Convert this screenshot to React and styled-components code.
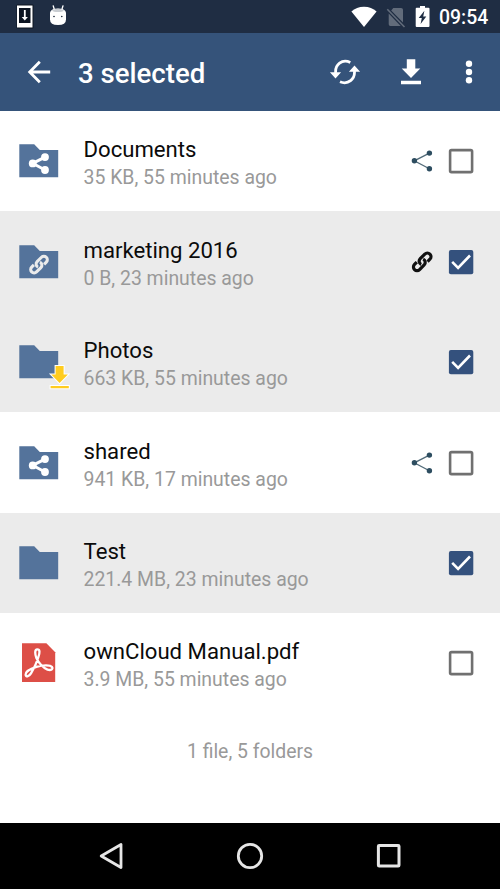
import React from "react";
import styled, { createGlobalStyle } from "styled-components";

const GlobalStyle = createGlobalStyle`
  * { box-sizing: border-box; }
  body { margin: 0; background: #fff; font-family: Roboto, "Liberation Sans", sans-serif; }
  svg { display: block; flex: none; }
`;

const Screen = styled.div`
  width: 500px;
  height: 889px;
  display: flex;
  flex-direction: column;
  overflow: hidden;
  background: #fff;
`;

const StatusBar = styled.header`
  height: 33px;
  flex: none;
  display: flex;
  align-items: center;
  justify-content: space-between;
  padding: 0 11px 0 16px;
  background: #1f2d43;
`;

const StatusGroup = styled.div`
  display: flex;
  align-items: center;
  height: 33px;
  gap: ${(p) => p.$gap}px;
`;

const Clock = styled.time`
  width: 50px;
  color: #fff;
  font-size: 19.4px;
  font-weight: 500;
  line-height: 33px;
  white-space: nowrap;
  padding-top: 1px;
`;

const AppBar = styled.div`
  height: 78px;
  flex: none;
  display: flex;
  align-items: center;
  padding: 0 27px 0 26px;
  background: #35537a;
`;

const IconButton = styled.button`
  display: flex;
  padding: 0;
  border: 0;
  background: none;
  color: #fff;
`;

const Title = styled.h1`
  flex: 1;
  margin: 3px 0 0 26px;
  color: #fff;
  font-size: 27.6px;
  font-weight: 500;
  line-height: 34px;
`;

const Actions = styled.div`
  display: flex;
  align-items: center;
`;

const Action = styled(IconButton)`
  margin-left: ${(p) => p.$space}px;
`;

const FileList = styled.main`
  flex: 1;
`;

const Row = styled.div`
  height: 100.45px;
  display: flex;
  align-items: center;
  padding: 0 26px 0 16px;
  background: ${(p) => (p.$selected ? "#ebebeb" : "#fff")};
`;

const Info = styled.div`
  flex: 1;
  margin-left: 11.5px;
  padding-top: 5px;
`;

const Name = styled.div`
  color: #0b0b0b;
  font-size: 22.15px;
  line-height: 28px;
  white-space: nowrap;
`;

const Details = styled.div`
  margin-top: 1px;
  color: #999;
  font-size: 19.43px;
  line-height: 28px;
  white-space: nowrap;
`;

const Badge = styled.div`
  width: 24px;
  height: 24px;
  display: flex;
  align-items: center;
  justify-content: center;
  color: #111;
  margin-right: 14px;
`;

const Summary = styled.div`
  padding-top: 24px;
  text-align: center;
  color: #999;
  font-size: 19.4px;
  line-height: 28px;
`;

const NavBar = styled.nav`
  height: 66.5px;
  flex: none;
  display: flex;
  align-items: center;
  justify-content: space-between;
  padding: 0 97px;
  background: #000;
`;

const UpdateIcon = () => (
  <svg width="18" height="25" viewBox="0 0 18 25">
    <rect x="0.5" y="0.5" width="17" height="24" rx="1" fill="#0c1421" />
    <path fillRule="evenodd" d="M1 1.5h15.5v22H1zM3 4v15h11.5V4z" fill="#fff" />
    <path d="M7.9 6h1.8v7h2.2l-3.1 3.6-3.1-3.6h2.2z" fill="#fff" />
  </svg>
);

const RobotIcon = () => (
  <svg width="20" height="25" viewBox="0 0 20 25">
    <path d="M5.2 1.8l1.2 4M15 1.8l-1.2 4" stroke="#fff" strokeWidth="1.3" strokeLinecap="round" />
    <path d="M2 8.5Q3 4.5 10 4.5t8 4v7Q18 21 10 21T2 15.5z" fill="#fff" />
    <path d="M4 6.4Q10 3.3 16 6.4 14.5 8 10 8T4 6.4z" fill="#c8ccd1" />
    <circle cx="6" cy="12.5" r="0.8" fill="#172334" />
    <circle cx="13.8" cy="12.5" r="0.8" fill="#172334" />
  </svg>
);

const WifiIcon = () => (
  <svg width="26" height="22" viewBox="0 0 26 22">
    <path d="M.4 5.5Q5.5.7 13 .7T25.6 5.5L13 21z" fill="#fff" />
  </svg>
);

const NoSimIcon = () => (
  <svg width="20" height="22" viewBox="0 0 20 22">
    <path d="M5.2 4.4l11.8 12V3.8Q17 2 15 2H7.3zM2.7 7.6L14.7 20H4.4q-1.7 0-1.7-1.7z" fill="#626c7b" />
    <path d="M1.3 3.2L18.5 21" stroke="#626c7b" strokeWidth="1.6" />
  </svg>
);

const BatteryIcon = () => (
  <svg width="15" height="23" viewBox="0 0 15 23">
    <path d="M5 1h5v1.7h3.5q1 0 1 1V21q0 1-1 1H1.7q-1 0-1-1V3.7q0-1 1-1H5z" fill="#fff" />
    <path d="M9.4 5.7L3.7 13h3.1l-1.2 6.1 5.7-7.5H8.2z" fill="#1f2d43" />
  </svg>
);

const BackIcon = () => (
  <svg width="26" height="26" viewBox="0 0 26 26">
    <path d="M13.8 2.7L3.7 13l10.1 10.2M4 13h20.2" fill="none" stroke="#fff" strokeWidth="2.8" />
  </svg>
);

const SyncIcon = () => (
  <svg width="32" height="28" viewBox="0 0 32 28">
    <path d="M21.3 4.4C13 .4 5.8 6.8 6.7 15M11 23.8c8.2 3.4 15.3-2.8 14.4-10.8" fill="none" stroke="#fff" strokeWidth="2.8" />
    <path d="M.9 14.2h11.2l-5.6 6.2zM19.9 13.7h11.2l-5.6-6.2z" fill="#fff" />
  </svg>
);

const DownloadIcon = () => (
  <svg width="22" height="28" viewBox="0 0 22 28">
    <path d="M6.8 1.3h8.5v9.2h5L11 20 1.7 10.5h5.1zM1 22.7h20v3.5H1z" fill="#fff" />
  </svg>
);

const MoreIcon = () => (
  <svg width="8" height="26" viewBox="0 0 8 26">
    {[4.7, 13, 21.3].map((y) => (
      <circle key={y} cx="4" cy={y} r="3.2" fill="#fff" />
    ))}
  </svg>
);

const ChainShape = ({ transform, color }) => (
  <g transform={transform} fill="none" stroke={color} strokeWidth="3.2">
    <path d="M4 3.6H7.3A3.6 3.6 0 0 0 7.3 -3.6H.8A3.6 3.6 0 0 0-2.6 1.2" />
    <path d="M-4-3.6H-7.3A3.6 3.6 0 0 0-7.3 3.6H-.8A3.6 3.6 0 0 0 2.6-1.2" />
  </g>
);

const ChainIcon = () => (
  <svg width="24" height="24" viewBox="0 0 24 24">
    <ChainShape transform="translate(12.2 11.8) rotate(-45)" color="#111" />
  </svg>
);

const FolderIcon = ({ kind }) => (
  <svg width="56" height="56" viewBox="0 0 56 56">
    <path d="M3.3 11.2h14.9l5.6 5.7h18.4v27.4H3.3z" fill="#54739b" />
    {kind === "share" && (
      <g fill="#fff">
        <path d="M29 24.1L16.7 30.4 29 37" fill="none" stroke="#fff" strokeWidth="2.9" />
        <circle cx="16.7" cy="30.4" r="3.9" />
        <circle cx="29" cy="24.1" r="3.9" />
        <circle cx="29" cy="37" r="3.9" />
      </g>
    )}
    {kind === "link" && (
      <ChainShape transform="translate(23 30.6) rotate(-45) scale(0.95)" color="#ebebeb" />
    )}
    {kind === "offline" && (
      <path
        d="M39.6 32h8v8.6h4.3L43.6 49l-8.3-8.4h4.3zM34.6 52.1h18.2v2.2H34.6z"
        fill="#ffcc1f"
        stroke="#fff"
        strokeWidth="2"
        paintOrder="stroke"
      />
    )}
  </svg>
);

const PdfIcon = () => (
  <svg width="56" height="56" viewBox="0 0 56 56">
    <path d="M6 8.3h24.4l8.8 8.9V47H6z" fill="#dd4f47" />
    <path
      d="M21.3 14.4C18.4 14.4 19 19.5 20.4 23 22.2 27.3 27 33 31.5 34.6 35 35.8 37.5 34 36 32 34.3 29.8 27 29.8 20.5 31.8 14.5 33.6 9.5 36.8 9.6 39.6 9.7 42.2 13 41.8 15 38.4 17.8 33.5 20.8 27.5 22.4 22 23.8 17.8 24.2 14.4 21.3 14.4z"
      fill="none"
      stroke="#fff"
      strokeWidth="2.3"
      strokeLinejoin="round"
    />
  </svg>
);

const ShareIcon = () => (
  <svg width="24" height="24" viewBox="0 0 24 24">
    <path d="M19.4 4.1L4.3 11.8l15.1 8" fill="none" stroke="#526b79" strokeWidth="1.3" />
    <g fill="#2d4d60">
      <circle cx="4.4" cy="11.8" r="2.7" />
      <circle cx="19.4" cy="4.1" r="2.7" />
      <circle cx="19.4" cy="19.8" r="2.7" />
    </g>
  </svg>
);

const CheckBox = ({ checked }) => (
  <svg width="26" height="26" viewBox="0 0 26 26" role="checkbox" aria-checked={checked}>
    {checked ? (
      <>
        <rect x="0.9" y="0.9" width="24.4" height="24.4" rx="2" fill="#34517d" />
        <path d="M4.2 12.9l5.9 6L22 6.5" fill="none" stroke="#fff" strokeWidth="2.6" />
      </>
    ) : (
      <rect x="2.1" y="2.1" width="22" height="22" rx="1.4" fill="none" stroke="#707070" strokeWidth="2.6" />
    )}
  </svg>
);

const files = [
  { name: "Documents", details: "35 KB, 55 minutes ago", kind: "share", selected: false },
  { name: "marketing 2016", details: "0 B, 23 minutes ago", kind: "link", selected: true },
  { name: "Photos", details: "663 KB, 55 minutes ago", kind: "offline", selected: true },
  { name: "shared", details: "941 KB, 17 minutes ago", kind: "share", selected: false },
  { name: "Test", details: "221.4 MB, 23 minutes ago", kind: "plain", selected: true },
  { name: "ownCloud Manual.pdf", details: "3.9 MB, 55 minutes ago", kind: "pdf", selected: false },
];

const FileRow = ({ file }) => (
  <Row $selected={file.selected}>
    {file.kind === "pdf" ? <PdfIcon /> : <FolderIcon kind={file.kind} />}
    <Info>
      <Name>{file.name}</Name>
      <Details>{file.details}</Details>
    </Info>
    <Badge>
      {file.kind === "share" && <ShareIcon />}
      {file.kind === "link" && <ChainIcon />}
    </Badge>
    <CheckBox checked={file.selected} />
  </Row>
);

export default function App() {
  return (
    <Screen>
      <GlobalStyle />
      <StatusBar>
        <StatusGroup $gap={14}>
          <UpdateIcon />
          <RobotIcon />
        </StatusGroup>
        <StatusGroup $gap={9}>
          <WifiIcon />
          <NoSimIcon />
          <BatteryIcon />
          <Clock>09:54</Clock>
        </StatusGroup>
      </StatusBar>
      <AppBar>
        <IconButton aria-label="Back"><BackIcon /></IconButton>
        <Title>3 selected</Title>
        <Actions>
          <Action $space={0} aria-label="Sync"><SyncIcon /></Action>
          <Action $space={39.5} aria-label="Download"><DownloadIcon /></Action>
          <Action $space={43} aria-label="More"><MoreIcon /></Action>
        </Actions>
      </AppBar>
      <FileList>
        {files.map((file) => (
          <FileRow key={file.name} file={file} />
        ))}
        <Summary>1 file, 5 folders</Summary>
      </FileList>
      <NavBar>
        <svg width="28" height="28" viewBox="0 0 28 28">
          <path d="M24 2.5v23L4.2 14z" fill="none" stroke="#e6e6e6" strokeWidth="2.8" strokeLinejoin="round" />
        </svg>
        <svg width="28" height="28" viewBox="0 0 28 28">
          <circle cx="14" cy="14" r="11.7" fill="none" stroke="#e6e6e6" strokeWidth="2.8" />
        </svg>
        <svg width="28" height="28" viewBox="0 0 28 28">
          <rect x="3.4" y="3.5" width="20.6" height="20.6" rx="0.8" fill="none" stroke="#e6e6e6" strokeWidth="3" />
        </svg>
      </NavBar>
    </Screen>
  );
}
